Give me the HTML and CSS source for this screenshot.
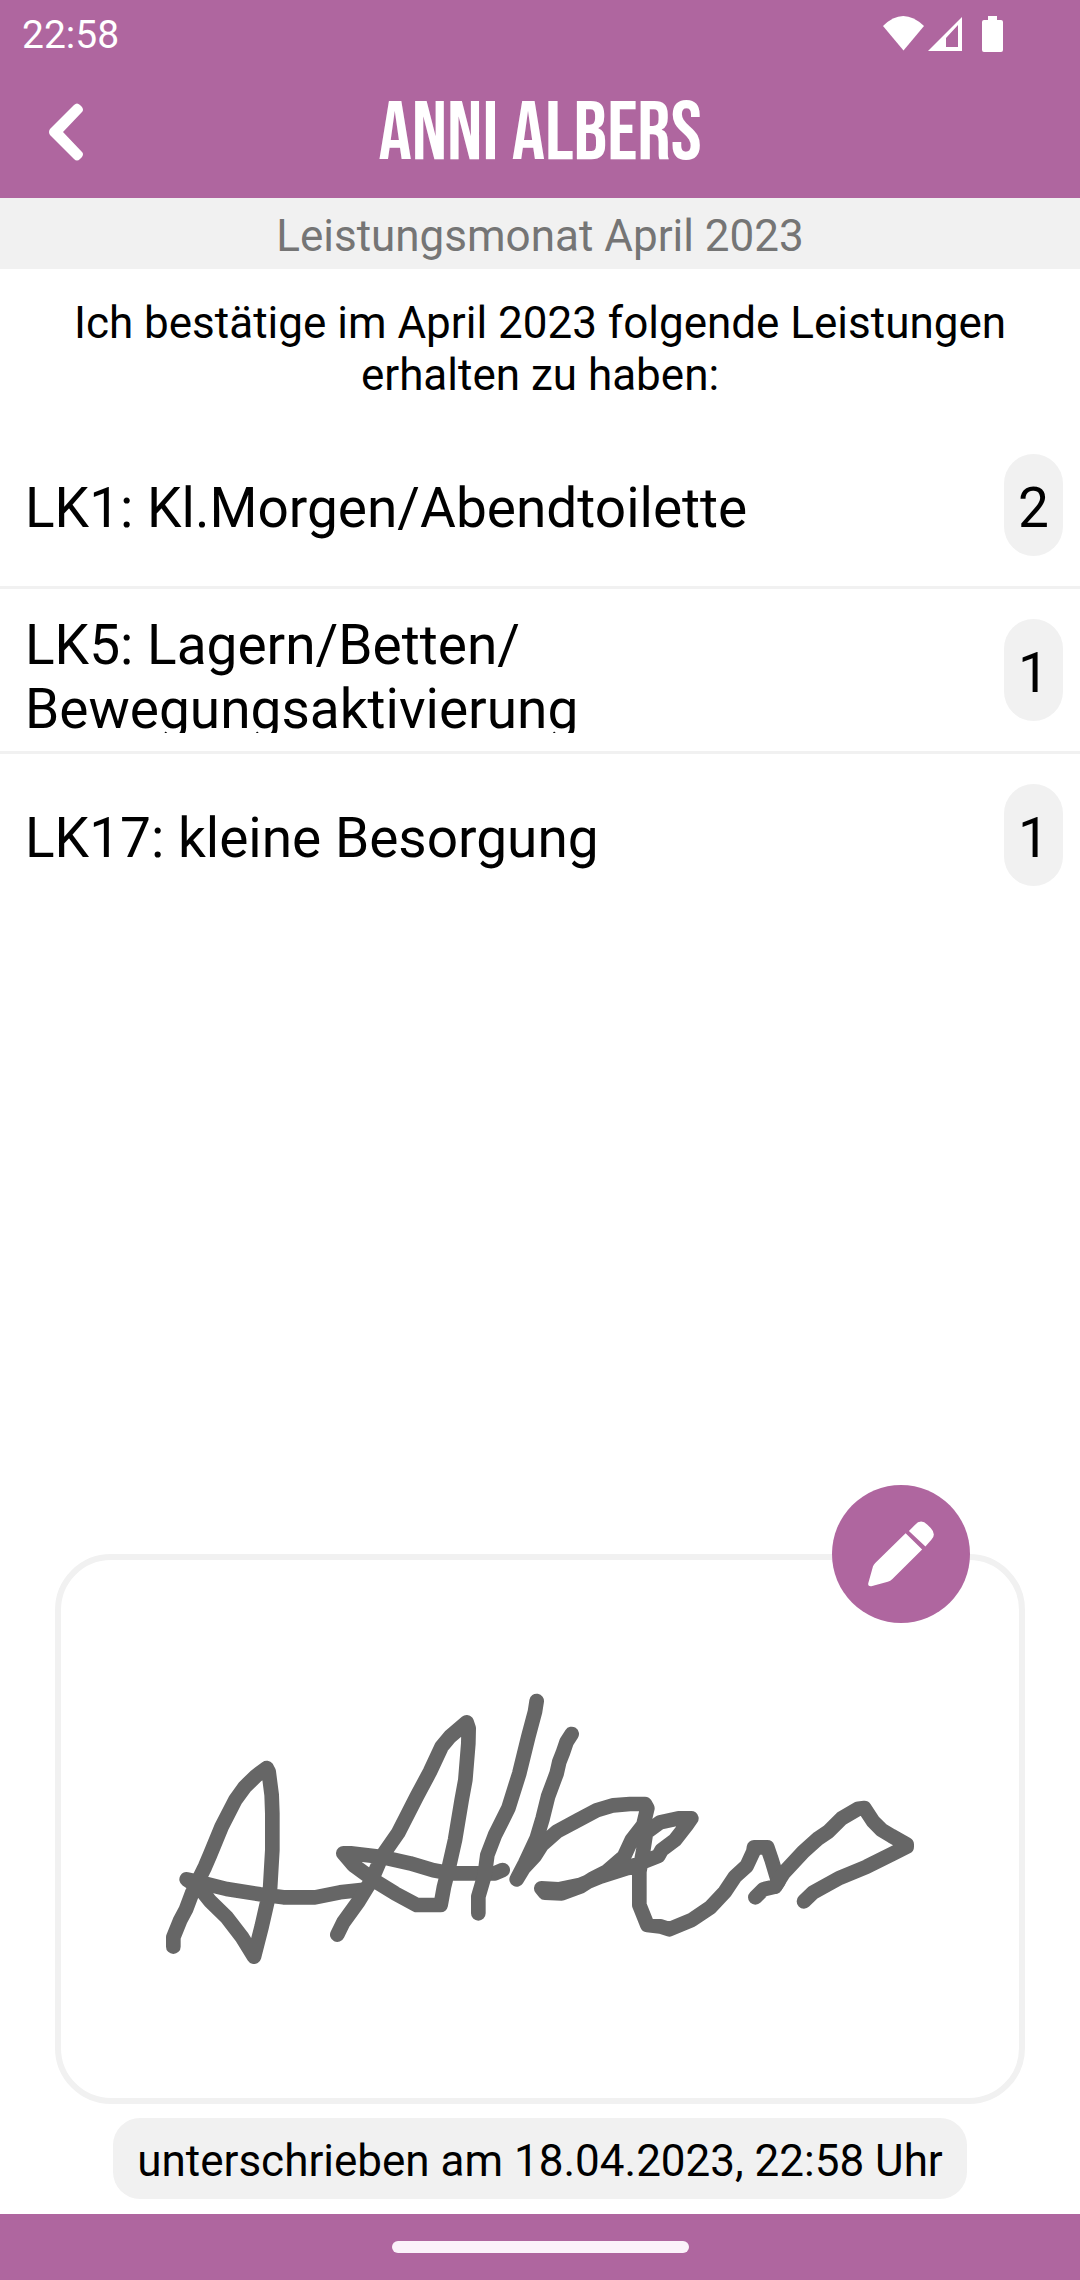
FILE: index.html
```html
<!DOCTYPE html>
<html lang="de">
<head>
<meta charset="utf-8">
<meta name="viewport" content="width=device-width, initial-scale=1">
<title>Leistungsnachweis – Anni Albers</title>
<link rel="stylesheet" href="styles.css">
</head>
<body>
<div class="screen">
  <header class="header">
    <div class="status">
      <span class="status-time">22:58</span>
      <svg class="status-icons" viewBox="0 0 122 36" aria-hidden="true">
        <path d="M0 10Q20-10 41 10L20.500 34.500Z"/>
        <path fill-rule="evenodd" d="M45 35L79 1V35ZM63 31H75V9L63 22Z"/>
        <path d="M105 0h9v4h4q2 0 2 2v28q0 2-2 2h-17q-2 0-2-2V6q0-2 2-2h4z"/>
      </svg>
    </div>
    <div class="toolbar">
      <button class="back" type="button" aria-label="Zurück">
        <svg viewBox="0 0 34 58" aria-hidden="true"><path fill-rule="evenodd" d="M1 26L25 2Q28-1 31 2L33 4Q35 7 33 9L14 29L33 49Q35 51 33 54L31 56Q28 59 25 56L1 32Q-1 29 1 26Z"/></svg>
      </button>
      <h1 class="title">ANNI ALBERS</h1>
    </div>
  </header>
  <h2 class="month">Leistungsmonat April 2023</h2>
  <main class="content">
    <p class="intro">Ich bestätige im April 2023 folgende Leistungen erhalten zu haben:</p>
    <ul class="services">
      <li class="service"><span class="service-name">LK1: Kl.Morgen/Abendtoilette</span><span class="count">2</span></li>
      <li class="service"><span class="service-name">LK5: Lagern/Betten/<wbr>Bewegungsaktivierung</span><span class="count">1</span></li>
      <li class="service"><span class="service-name">LK17: kleine Besorgung</span><span class="count">1</span></li>
    </ul>
    <section class="signature" aria-label="Unterschrift">
      <svg class="signature-ink" viewBox="0 0 2340 900" role="img" aria-label="Unterschrift A Albers">
        <path d="M70 800V772L90 722L108 688L126 640L165 560L180 525L215 440L256 360L285 320L318 288L350 264L356 275L365 345L367 400V510L360 630L335 740L312 830L275 770L230 712L180 663L150 625L110 598L145 606L230 627L330 643L400 652H495L570 637L640 629"/>
        <path d="M562 764L580 727L625 665L665 600L695 530L745 458L800 350L840 275L875 200L900 170L950 127L956 145L955 190L946 300L935 360L915 480L897 560L882 620L872 675H800L735 640L680 606L610 555L580 520H602L690 530L780 550L850 571L900 580H1035L1058 570"/>
        <path d="M1160 63L1155 95L1135 170L1108 280L1075 385L1035 465L1012 525L1004 585L985 650V700"/>
        <g transform="translate(1140)">
          <path d="M125 162L110 185L98 220L88 245L80 280L54 350L38 415L20 475L-15 550L-40 598L-20 565L15 527L35 495L80 455L145 420L200 391L250 376L300 372H345L352 385L340 435L305 480L282 530L230 575L190 595L150 620L95 640L45 638L34 625L85 628L150 615L210 590L290 565L385 528L395 510L435 480L470 435L484 415H445L390 427L348 458L340 510L328 575V675L352 735L390 739L418 748L485 720L540 683L585 635L615 590L650 558L670 515L672 502H712L725 540L740 590L745 605L735 620L700 628L676 652"/>
          <path d="M735 620L760 580L820 515L865 475L895 455L935 415L985 386L1003 384L1030 425L1055 450L1085 468L1130 493V500L1090 520L1010 560L930 593L850 637L822 664"/>
        </g>
      </svg>
      <button class="edit" type="button" aria-label="Unterschrift bearbeiten">
        <svg viewBox="0 0 200 200" aria-hidden="true">
          <path d="M124 30L142 12Q160-8 180 11L190 21Q208 40 192 57L174 77Z"/>
          <path d="M114 37L164 86L74 176Q68 182 60 184L10 198Q-2 199 1 188L15 138Q17 132 22 127Z"/>
        </svg>
      </button>
    </section>
    <p class="signed">unterschrieben am 18.04.2023, 22:58 Uhr</p>
  </main>
  <footer class="navbar"><span class="handle"></span></footer>
</div>
</body>
</html>
```
FILE: styles.css
```css
:root {
  --accent: #af669f;
  --soft: #f1f1f1;
}

* {
  box-sizing: border-box;
}

body {
  margin: 0;
  background: #fff;
  color: #000;
  font-family: Roboto, "Liberation Sans", sans-serif;
}

h1, h2, p, ul {
  margin: 0;
  padding: 0;
  font-weight: 400;
}

button {
  border: 0;
  padding: 0;
  background: none;
  cursor: pointer;
}

.screen {
  min-height: 100vh;
  display: flex;
  flex-direction: column;
}

.header {
  background: var(--accent);
  color: #fff;
}

.status {
  height: 66px;
  padding: 2px 75px 0 22px;
  display: flex;
  align-items: center;
  justify-content: space-between;
}

.status-time {
  padding-top: 2px;
  font-size: 39px;
  line-height: 46px;
}

.status-icons {
  width: 122px;
  height: 36px;
  fill: #fff;
}

.toolbar {
  height: 132px;
  padding: 0 49px;
  display: grid;
  grid-template-columns: 34px 1fr 34px;
  align-items: center;
}

.back svg {
  display: block;
  width: 34px;
  height: 58px;
  fill: #fff;
}

.title {
  padding-top: 4px;
  text-align: center;
  font-family: "Bebas Neue", "Liberation Sans Narrow", "Liberation Sans", sans-serif;
  font-size: 83px;
  line-height: 100px;
}

.month {
  padding: 12px 24px 7px;
  background: var(--soft);
  color: #757575;
  font-size: 44px;
  line-height: 52px;
  text-align: center;
}

.content {
  flex: 1;
  display: flex;
  flex-direction: column;
}

.intro {
  padding: 28px 24px 23px;
  font-size: 44px;
  line-height: 52px;
  text-align: center;
}

.services {
  flex: 1;
  list-style: none;
}

.service {
  height: 165px;
  padding: 0 17px 0 25px;
  border-bottom: 3px solid var(--soft);
  display: flex;
  align-items: center;
  justify-content: space-between;
  gap: 24px;
  font-size: 55px;
  line-height: 64px;
}

.service:last-child {
  border-bottom-color: transparent;
}

.service-name {
  max-height: 126px;
  padding-top: 6px;
  overflow: hidden;
}

.count {
  flex: none;
  min-width: 59px;
  height: 102px;
  padding-top: 6px;
  border-radius: 30px;
  background: var(--soft);
  display: flex;
  align-items: center;
  justify-content: center;
}

.signature {
  position: relative;
  margin: 0 55px;
  padding: 120px 24px 118px;
  border: 6px solid var(--soft);
  border-radius: 56px;
}

.signature-ink {
  display: block;
  width: 100%;
  max-width: 780px;
  margin: 0 auto;
  fill: none;
  stroke: #666;
  stroke-width: 44;
  stroke-linecap: round;
  stroke-linejoin: round;
}

.edit {
  position: absolute;
  top: -75px;
  right: 49px;
  width: 138px;
  height: 138px;
  border-radius: 50%;
  background: var(--accent);
  display: grid;
  place-items: center;
}

.edit svg {
  width: 66px;
  height: 66px;
  fill: #fff;
}

.signed {
  align-self: center;
  margin: 14px 24px 15px;
  padding: 17px 24px 12px;
  border-radius: 27px;
  background: var(--soft);
  font-size: 44px;
  line-height: 52px;
  text-align: center;
}

.navbar {
  height: 66px;
  background: var(--accent);
  display: flex;
  align-items: center;
  justify-content: center;
}

.handle {
  width: 297px;
  height: 12px;
  border-radius: 6px;
  background: #fbf2fa;
}
```
